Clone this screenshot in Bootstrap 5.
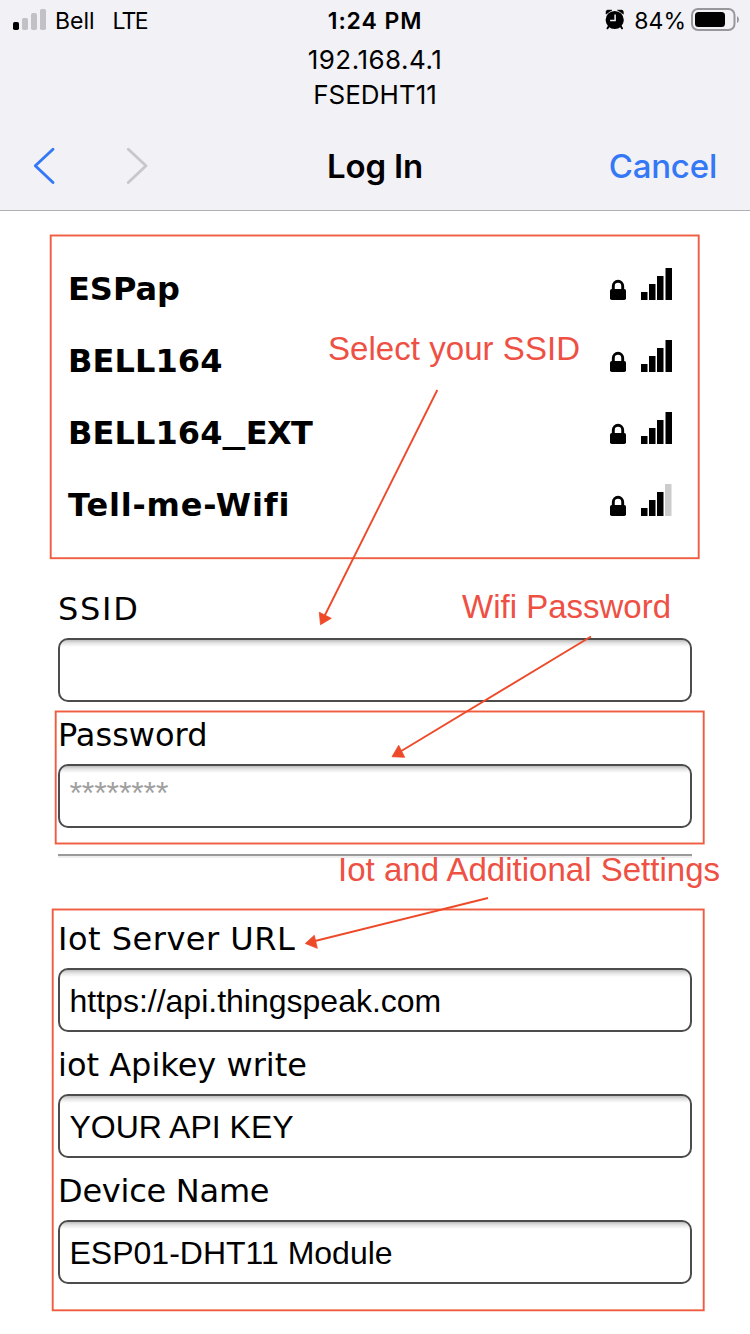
<!DOCTYPE html>
<html lang="en">
<head>
<meta charset="utf-8">
<meta name="viewport" content="width=device-width, initial-scale=1">
<title>Log In</title>
<link href="https://cdn.jsdelivr.net/npm/bootstrap@5.3.0/dist/css/bootstrap.min.css" rel="stylesheet">
<script src="https://cdn.jsdelivr.net/npm/bootstrap@5.3.0/dist/js/bootstrap.bundle.min.js" defer></script>
<style>
body{font-family:"DejaVu Sans",sans-serif;font-size:32px;color:#000;background:#fff;height:1334px;overflow:hidden}
.top-area{font-family:Inter,sans-serif;background:#f2f1f6;height:211px;border-bottom:1px solid #b0afb3}
.status-row,.nav-row{display:grid;grid-template-columns:1fr auto 1fr}
.status-row{height:42px;font-size:23px;line-height:42px}
.status-row svg{display:block}
.network-type{margin-left:18px;letter-spacing:-1.8px}
.clock{letter-spacing:.9px}
.host-lines{font-size:26px;line-height:36px;height:80px}
.host-lines div{height:35px}
.host-ip{letter-spacing:.5px}
.nav-row{height:88px;font-size:33px;line-height:88px}
.nav-title{letter-spacing:-.2px}
.action-link{color:#3478f6;font-weight:550;letter-spacing:-.2px;padding-right:33px}
.portal{padding:42px 58px 0}
.net-list{margin-bottom:35px}
.net-row{height:72px;line-height:72px;font-weight:700;padding:0 10px}
.net-row svg{display:block}
.wide-underscore{display:inline-block;transform:translate(3px,-2px) scaleX(1.42);margin-right:7px}
.field-label{display:block;height:62px;line-height:58px;padding-top:4px}
.portal .form-control{font-family:"Liberation Sans",sans-serif;font-size:32px;line-height:36px;height:64px;padding:2px 9.5px 0;border:2px solid #4c4c4c;border-radius:10px;color:#000;background:linear-gradient(#bdbdbd,#e4e4e4 3px,#fff 7px) padding-box}
.portal .form-control::placeholder{color:#a0a0a0;opacity:1;letter-spacing:-.1px;transform:translateY(-4px)}
.rule{height:4px;margin:26px 0 48px;background:linear-gradient(#9a9a9a 2px,#eee 2px)}
.notes{left:0;top:0;pointer-events:none}
.notes text{font-family:"Liberation Sans",sans-serif;font-size:33px;fill:#ee5044}
.ls-1{letter-spacing:.1px}.ls-5{letter-spacing:.5px}.ls-8{letter-spacing:.8px}.ls-15{letter-spacing:1.7px}.ls-n{letter-spacing:-.25px}.ls-ext{letter-spacing:-.6px}
</style>
</head>
<body class="position-relative">
<svg width="0" height="0" class="position-absolute" aria-hidden="true">
  <defs>
    <g id="lock"><rect x="0" y="21" width="16" height="11" rx="1.8"/><path d="M3.300 22v-4a4.700 4.700 0 0 1 9.400 0v4" fill="none" stroke="#000" stroke-width="2.900"/></g>
    <g id="bars3"><rect x="31" y="24" width="6.500" height="8"/><rect x="39" y="16" width="6.500" height="16"/><rect x="47" y="8" width="6.500" height="24"/></g>
  </defs>
</svg>

<header class="top-area">
  <div class="status-row">
    <div class="d-flex">
      <svg width="55" height="42"><rect x="13" y="22" width="6" height="8" rx="1.7"/><g fill="#c2c1c6"><rect x="22" y="18" width="6" height="12" rx="1.7"/><rect x="31" y="13" width="6" height="17" rx="1.7"/><rect x="40" y="9" width="6" height="21" rx="1.7"/></g></svg>
      <span>Bell</span><span class="network-type">LTE</span>
    </div>
    <div class="clock fw-semibold">1:24 PM</div>
    <div class="d-flex justify-content-end">
      <svg width="29" height="42" viewBox="605 0 29 42"><circle cx="614.700" cy="20" r="9.100"/><path d="M606 14.200v-2.400q.2-1.500 1.600-1.700h4.400zM623.400 14.200v-2.400q-.2-1.500-1.600-1.700h-4.400z" stroke="#000" stroke-width=".5"/><path d="M609 26l-1.500 2.300M620.500 26l1.500 2.300" stroke="#000" stroke-width="2" stroke-linecap="round"/><path d="M615.100 14.500v6h-5" fill="none" stroke="#f2f1f6" stroke-width="1.500"/></svg>
      <span>84%</span>
      <svg width="64" height="42" viewBox="686 0 64 42"><rect x="692" y="9" width="42.500" height="21" rx="6" fill="none" stroke="#98979b" stroke-width="2"/><rect x="695" y="12" width="30" height="15" rx="3.500"/><path d="M737 16q2 1 2 3.500t-2 3.500z" fill="#98979b"/></svg>
    </div>
  </div>
  <div class="host-lines text-center"><div class="host-ip">192.168.4.1</div><div>FSEDHT11</div></div>
  <div class="nav-row">
    <div><svg class="d-block" width="160" height="88" viewBox="0 122 160 88" fill="none" stroke-width="2.900" stroke-linecap="round" stroke-linejoin="round"><path d="M53 149.200L35.300 165.700L53 182.500" stroke="#3478f6"/><path d="M128.300 149.200L146 165.700L128.300 182.500" stroke="#c8c7cc"/></svg></div>
    <div class="nav-title fw-semibold">Log In</div>
    <div class="text-end action-link">Cancel</div>
  </div>
</header>

<main class="portal">
  <div class="net-list">
    <div class="net-row d-flex justify-content-between align-items-center"><span>ESPap</span><svg width="72" height="42" viewBox="0 0 72 42"><use href="#lock"/><use href="#bars3"/><rect x="55.500" width="6.500" height="32"/></svg></div>
    <div class="net-row d-flex justify-content-between align-items-center"><span class="ls-1">BELL164</span><svg width="72" height="42" viewBox="0 0 72 42"><use href="#lock"/><use href="#bars3"/><rect x="55.500" width="6.500" height="32"/></svg></div>
    <div class="net-row d-flex justify-content-between align-items-center"><span class="ls-1">BELL164<span class="wide-underscore">_</span><span class="ls-ext">EXT</span></span><svg width="72" height="42" viewBox="0 0 72 42"><use href="#lock"/><use href="#bars3"/><rect x="55.500" width="6.500" height="32"/></svg></div>
    <div class="net-row d-flex justify-content-between align-items-center"><span class="ls-8">Tell-me-Wifi</span><svg width="72" height="42" viewBox="0 0 72 42"><use href="#lock"/><use href="#bars3"/><rect x="55" width="6.500" height="32" fill="#ccc"/></svg></div>
  </div>
  <label class="field-label ls-15" for="s">SSID</label><input id="s" class="form-control">
  <label class="field-label" for="p">Password</label><input id="p" class="form-control" placeholder="********">
  <div class="rule"></div>
  <label class="field-label ls-5" for="u">Iot Server URL</label><input id="u" class="form-control" value="https://api.thingspeak.com">
  <label class="field-label" for="k">iot Apikey write</label><input id="k" class="form-control" value="YOUR API KEY">
  <label class="field-label ls-n" for="d">Device Name</label><input id="d" class="form-control" value="ESP01-DHT11 Module">
</main>

<svg class="notes position-absolute" width="750" height="1334" viewBox="0 0 750 1334">
  <g stroke="#ee4a2a" stroke-width="1.900" fill="none">
    <g stroke-opacity=".9">
      <rect x="50.700" y="235.500" width="648" height="322.700"/>
      <rect x="55.700" y="711.500" width="648" height="132"/>
      <rect x="52.700" y="909.500" width="651" height="400.800"/>
    </g>
    <path d="M437.300 390L324 617M591 636.500L398 753M488 898L313 941.500"/>
    <path fill="#ee4a2a" stroke-width=".8" d="M319.300 612.300L331.300 618.300L320.500 624.700zM398.700 745.300L392 756.700L404.700 757.300zM305.300 943.500L314.300 935.300L317.300 948.300z"/>
  </g>
  <text x="328" y="359.500" textLength="252">Select your SSID</text>
  <text x="462" y="617.500" textLength="209">Wifi Password</text>
  <text x="338" y="880.500" textLength="382">Iot and Additional Settings</text>
</svg>
</body>
</html>
